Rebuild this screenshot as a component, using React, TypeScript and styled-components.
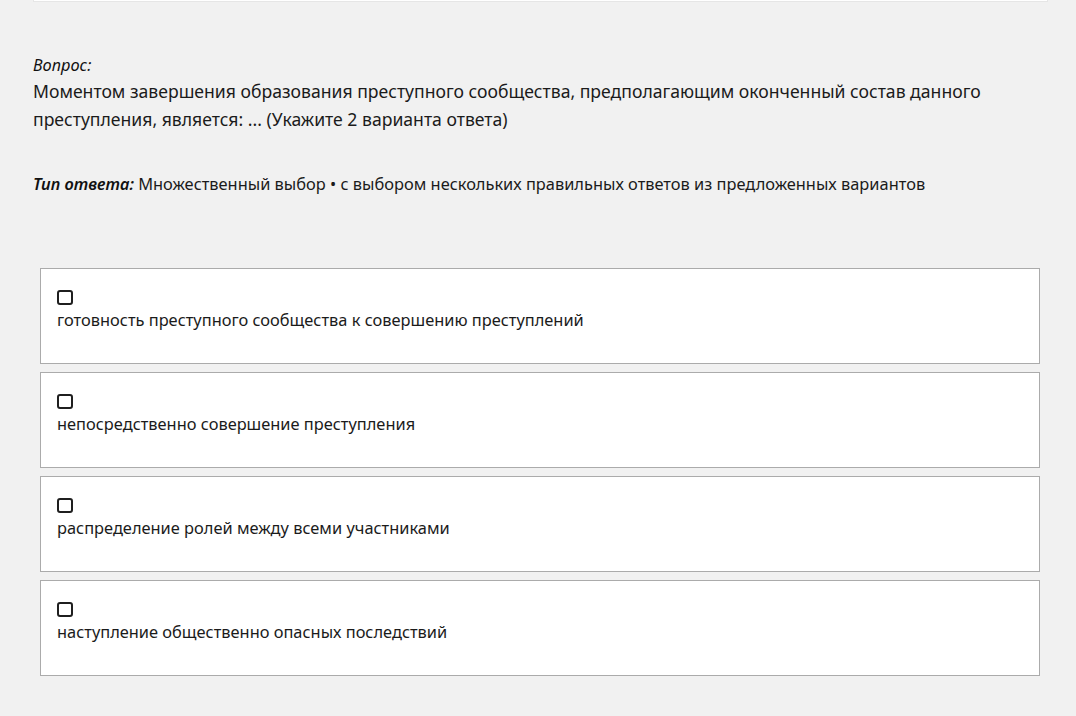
import React from "react";
import styled, { createGlobalStyle } from "styled-components";

const Global = createGlobalStyle`
  html, body { margin: 0; padding: 0; background: #f1f1f1; }
  body { font-family: "Noto Sans", "Open Sans", sans-serif; color: #1b1b1b; }
`;

const Page = styled.div`
  width: 1076px;
  height: 716px;
  overflow: hidden;
  background: #f1f1f1;
  box-sizing: border-box;
  padding: 0 28px 0 33px;
`;

const TopPanel = styled.div`
  height: 1px;
  background: #ffffff;
  border: 1px solid #e6e6e6;
  border-top: none;
`;

const QuestionBlock = styled.section`
  margin-top: 51px;
`;

const Label = styled.div`
  font-style: italic;
  font-size: 16.4px;
  line-height: 24px;
  color: #111;
`;

const QuestionText = styled.p`
  margin: 0;
  font-size: 17.6px;
  line-height: 28px;
`;

const TypeLine = styled.p`
  margin: 39px 0 0;
  font-size: 16.4px;
  line-height: 24px;
`;

const TypeLabel = styled.span`
  font-style: italic;
  font-weight: 600;
  color: #111;
`;

const Options = styled.div`
  margin: 72px 8px 0 7px;
  display: flex;
  flex-direction: column;
  gap: 8px;
`;

const Card = styled.label`
  display: flex;
  flex-direction: column;
  align-items: flex-start;
  height: 96px;
  box-sizing: border-box;
  padding: 21px 16px 0;
  background: #ffffff;
  border: 1px solid #ababab;
  cursor: pointer;
`;

const Box = styled.span`
  width: 16px;
  height: 15px;
  box-sizing: border-box;
  border: 2px solid #1f1f1f;
  border-radius: 3px;
  background: #fff;
`;

const OptionText = styled.span`
  margin-top: 3px;
  font-size: 16.4px;
  line-height: 24px;
`;

const options = [
  "готовность преступного сообщества к совершению преступлений",
  "непосредственно совершение преступления",
  "распределение ролей между всеми участниками",
  "наступление общественно опасных последствий",
];

export default function App() {
  return (
    <>
      <Global />
      <Page>
        <TopPanel />
        <QuestionBlock>
          <Label>Вопрос:</Label>
          <QuestionText>
            Моментом завершения образования преступного сообщества, предполагающим оконченный состав данного
            преступления, является: ... (Укажите 2 варианта ответа)
          </QuestionText>
          <TypeLine>
            <TypeLabel>Тип ответа:</TypeLabel> Множественный выбор • с выбором нескольких правильных ответов из
            предложенных вариантов
          </TypeLine>
        </QuestionBlock>
        <Options>
          {options.map((o) => (
            <Card key={o}>
              <Box />
              <OptionText>{o}</OptionText>
            </Card>
          ))}
        </Options>
      </Page>
    </>
  );
}
